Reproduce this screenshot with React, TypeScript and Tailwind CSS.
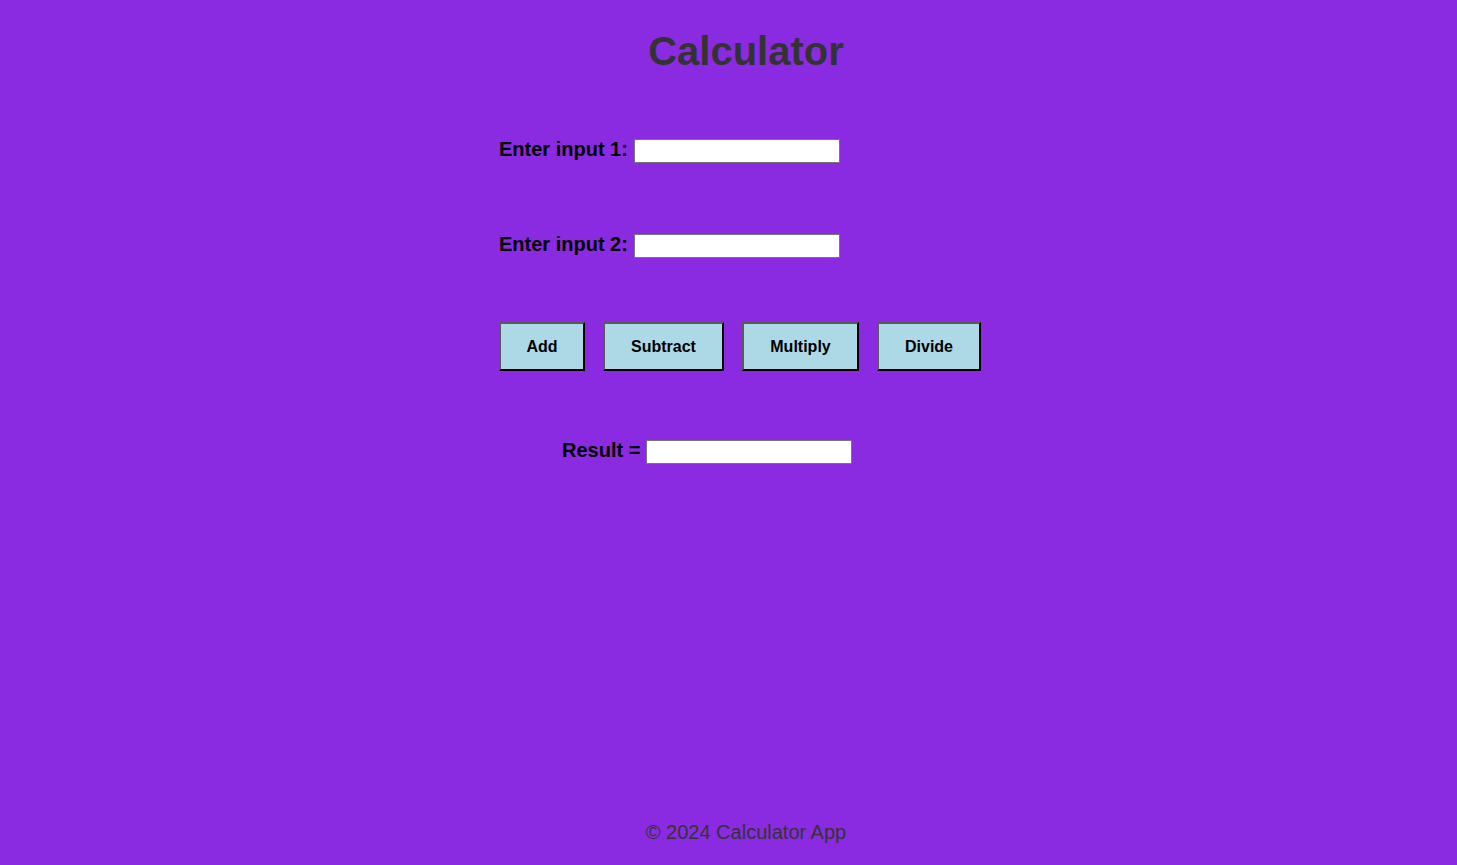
const inputClass =
  "h-[24px] w-[206px] border border-[#767676] bg-white px-[2px] text-[13px] text-black outline-none";

const buttonClass =
  "h-[49px] border-2 border-t-[#5a5a5a] border-l-[#5a5a5a] border-r-black border-b-black bg-[#add8e6] text-[16px] font-bold text-black";

const labelClass = "text-[20px] font-bold leading-[20px] text-black";

export default function App() {
  return (
    <div className="flex min-h-[865px] flex-col bg-[#8a2be2] font-['Liberation_Sans',Arial,sans-serif]">
      <main className="flex-1">
        <h1 className="mt-[28px] pl-[35px] text-center text-[40px] font-bold leading-[46px] text-[#333]">
          Calculator
        </h1>

        <div className="flex justify-center pl-[23px]">
          <div className="w-[482px]">
            <div className="mt-[65px] flex items-start gap-[6px]">
              <label className={labelClass}>Enter input 1:</label>
              <input type="text" className={inputClass} />
            </div>

            <div className="mt-[71px] flex items-start gap-[6px]">
              <label className={labelClass}>Enter input 2:</label>
              <input type="text" className={inputClass} />
            </div>

            <div className="mt-[64px] flex gap-[18px]">
              <button className={`${buttonClass} w-[86px]`}>Add</button>
              <button className={`${buttonClass} w-[121px]`}>Subtract</button>
              <button className={`${buttonClass} w-[117px]`}>Multiply</button>
              <button className={`${buttonClass} w-[104px]`}>Divide</button>
            </div>

            <div className="ml-[63px] mt-[69px] flex items-start gap-[6px]">
              <label className={labelClass}>Result =</label>
              <input type="text" readOnly className={inputClass} />
            </div>
          </div>
        </div>
      </main>

      <footer className="pb-[21px] pl-[35px] text-center text-[20px] leading-[23px] text-[#333]">
        © 2024 Calculator App
      </footer>
    </div>
  );
}
